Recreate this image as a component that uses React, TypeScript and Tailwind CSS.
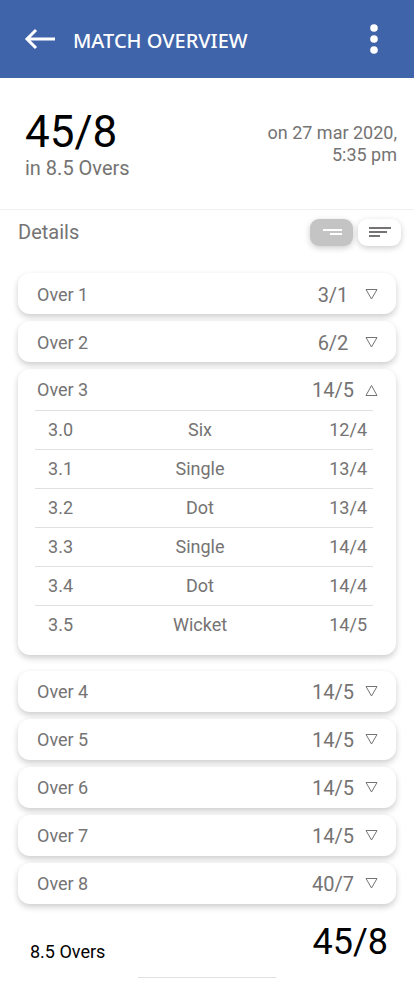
import { useState } from 'react';

type Ball = { ball: string; result: string; score: string };
type Over = { id: number; score: string; balls: Ball[] };

const overs: Over[] = [
  { id: 1, score: '3/1', balls: [] },
  { id: 2, score: '6/2', balls: [] },
  {
    id: 3,
    score: '14/5',
    balls: [
      { ball: '3.0', result: 'Six', score: '12/4' },
      { ball: '3.1', result: 'Single', score: '13/4' },
      { ball: '3.2', result: 'Dot', score: '13/4' },
      { ball: '3.3', result: 'Single', score: '14/4' },
      { ball: '3.4', result: 'Dot', score: '14/4' },
      { ball: '3.5', result: 'Wicket', score: '14/5' },
    ],
  },
  { id: 4, score: '14/5', balls: [] },
  { id: 5, score: '14/5', balls: [] },
  { id: 6, score: '14/5', balls: [] },
  { id: 7, score: '14/5', balls: [] },
  { id: 8, score: '40/7', balls: [] },
];

function Triangle({ up }: { up: boolean }) {
  return (
    <svg width="13" height="12" viewBox="0 0 13 12" fill="none" stroke="currentColor" aria-hidden="true">
      <path d={up ? 'M6.5 1.5L12 11.5H1Z' : 'M6.5 10L1 0.5H12Z'} />
    </svg>
  );
}

function OverCard({ over, open, onToggle }: { over: Over; open: boolean; onToggle: () => void }) {
  const expanded = open && over.balls.length > 0;
  return (
    <li
      className={`rounded-xl bg-white shadow-[0_3px_6px_rgba(0,0,0,0.2)] ${expanded ? 'mb-[9px] pb-2.5' : ''}`}
    >
      <button
        type="button"
        onClick={onToggle}
        aria-expanded={expanded}
        className={`flex h-[41px] w-full items-center pr-[18px] pl-[19px] text-left ${expanded ? '' : 'pt-0.5'}`}
      >
        <span className="flex-1 text-lg">Over {over.id}</span>
        <span className="w-16 text-center text-xl">{over.score}</span>
        <Triangle up={expanded} />
      </button>
      {expanded && (
        <div className="pr-[23px] pl-[17px]">
          <table className="w-full table-fixed text-lg">
            <tbody>
              {over.balls.map((b) => (
                <tr key={b.ball} className="h-[39px] border-t border-[#e0e0e0]">
                  <td className="w-[38px] text-right">{b.ball}</td>
                  <td className="pl-1 text-center">{b.result}</td>
                  <td className="w-[50px] pr-1.5 text-right">{b.score}</td>
                </tr>
              ))}
            </tbody>
          </table>
        </div>
      )}
    </li>
  );
}

export default function App() {
  const [openId, setOpenId] = useState<number | null>(3);
  const [view, setView] = useState<'compact' | 'full'>('compact');

  const toggleClass = (active: boolean) =>
    `flex h-[27px] w-[43px] items-center justify-center rounded-[9px] shadow-[0_2px_6px_rgba(0,0,0,0.2)] ${
      active ? 'bg-[#c4c4c4] text-white' : 'bg-white text-[#757373]'
    }`;

  return (
    <div className="min-h-screen bg-white font-[Roboto,sans-serif] text-[#757373]">
      <header className="flex h-[78px] items-center bg-[#4064aa] pr-6 pl-6 text-white">
        <button type="button" aria-label="Back">
          <svg width="32" height="22" viewBox="0 0 32 22" fill="none" stroke="currentColor" strokeWidth="3">
            <path d="M31 11H3.5M12 2L3 11L12 20" />
          </svg>
        </button>
        <h1 className="flex-1 pt-1 pl-[17px] font-['Noto_Sans','Open_Sans',sans-serif] text-xl font-medium">
          MATCH OVERVIEW
        </h1>
        <button type="button" aria-label="More options" className="px-3">
          <svg width="8" height="30" viewBox="0 0 8 30" fill="currentColor">
            <circle cx="4" cy="4" r="3.8" />
            <circle cx="4" cy="15" r="3.8" />
            <circle cx="4" cy="26" r="3.8" />
          </svg>
        </button>
      </header>

      <section className="flex h-[132px] items-start justify-between border-b border-[#f0f0f0] pt-8 pr-[17px] pl-[25px]">
        <div>
          <p className="text-[44px] leading-[44px] text-black">45/8</p>
          <p className="text-xl leading-7">in 8.5 Overs</p>
        </div>
        <p className="pt-3 text-right text-lg leading-[22px]">
          on 27 mar 2020,
          <br />
          5:35 pm
        </p>
      </section>

      <main>
        <div className="flex h-11 items-center justify-between pr-[13px] pl-[18px]">
          <h2 className="text-xl">Details</h2>
          <div className="flex gap-[5px]">
            <button
              type="button"
              aria-label="Compact view"
              aria-pressed={view === 'compact'}
              onClick={() => setView('compact')}
              className={toggleClass(view === 'compact')}
            >
              <svg width="22" height="12" viewBox="0 0 22 12" fill="currentColor">
                <path d="M2 3H21V5H2ZM9 7H21V9H9Z" />
              </svg>
            </button>
            <button
              type="button"
              aria-label="Full view"
              aria-pressed={view === 'full'}
              onClick={() => setView('full')}
              className={toggleClass(view === 'full')}
            >
              <svg width="22" height="12" viewBox="0 0 22 12" fill="currentColor">
                <path d="M0 1H22V3H0ZM0 5H18V7H0ZM0 9H11V11H0Z" />
              </svg>
            </button>
          </div>
        </div>
        <ul className="mt-[19px] flex flex-col gap-[7px] px-[18px]">
          {overs.map((o) => (
            <OverCard
              key={o.id}
              over={o}
              open={openId === o.id}
              onToggle={() => setOpenId(openId === o.id ? null : o.id)}
            />
          ))}
        </ul>
      </main>

      <footer className="pt-3.5">
        <div className="flex items-center justify-between pr-[26px] pl-[30px] text-black">
          <span className="pt-5 text-lg">8.5 Overs</span>
          <span className="text-4xl leading-[44px]">45/8</span>
        </div>
        <hr className="mx-auto mt-[11px] w-1/3 border-[#e0e0e0]" />
      </footer>
    </div>
  );
}
